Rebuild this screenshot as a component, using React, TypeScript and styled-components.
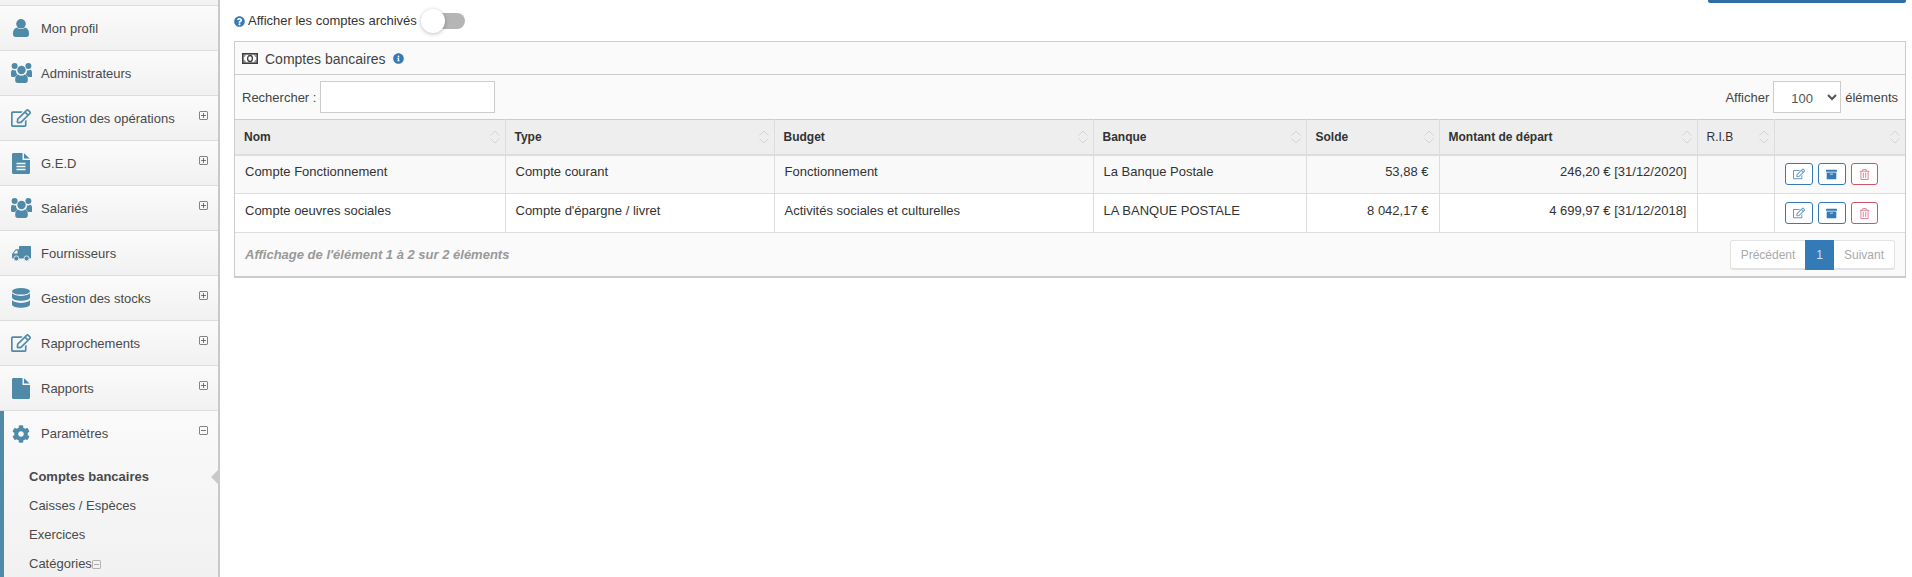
import React from "react";
import styled, { createGlobalStyle } from "styled-components";
import { FaArchive, FaCog, FaInfoCircle, FaQuestionCircle, FaRegEdit, FaRegTrashAlt } from "react-icons/fa";

const GlobalStyle = createGlobalStyle`
  html, body {
    margin: 0;
    padding: 0;
    height: 100%;
    overflow: hidden;
    background: #fff;
    font-family: "Liberation Sans", Arial, sans-serif;
    font-size: 13px;
    color: #333;
  }
`;

const SquareIcon = ({ plus }: { plus?: boolean }) => (
  <svg width="9" height="9" viewBox="0 0 9 9" fill="none" stroke="currentColor" strokeWidth="0.8">
    <rect x="0.4" y="0.4" width="8.2" height="8.2" rx="1.4" />
    <path d="M2 4.5h5" />
    {plus && <path d="M4.5 2v5" />}
  </svg>
);

const SortIcon = () => (
  <svg width="10" height="14" viewBox="0 0 10 14" fill="none" stroke="#d4d4d4" strokeWidth="1">
    <path d="M0.5 5.5L5 1l4.5 4.5" />
    <path d="M0.5 8.5L5 13l4.5-4.5" />
  </svg>
);

const UserIcon = () => (
  <svg width="16" height="18" viewBox="0 0 16 18" fill="currentColor">
    <circle cx="8" cy="4.8" r="4.8" />
    <path d="M0 14c0-3 1.6-5 4-5.6C5 9.4 6.4 10 8 10s3-.6 4-1.6c2.400.6 4 2.600 4 5.600v1.500c0 1.400-1 2.500-2.500 2.500h-11C1 18 0 16.900 0 15.500z" />
  </svg>
);

const UsersIcon = () => (
  <svg width="21" height="20" viewBox="0 0 21 20" fill="currentColor">
    <circle cx="3.600" cy="3" r="3" />
    <circle cx="17.400" cy="3" r="3" />
    <circle cx="10.500" cy="7" r="4.200" />
    <path d="M0 9.500c0-1.600.8-2.500 1.800-2.700.7.500 1.300.7 2 .7.500 0 1-.1 1.300-.3-.2 1.800.4 3.300 1.500 4.400-1.200.5-2 1.400-2.500 2.400H1.500C.6 14 0 13.400 0 12.500z" />
    <path d="M21 9.500c0-1.600-.8-2.500-1.800-2.700-.7.500-1.300.7-2 .7-.5 0-1-.1-1.300-.3.2 1.800-.4 3.300-1.500 4.400 1.200.5 2 1.400 2.500 2.400h3.600c.9 0 1.500-.6 1.500-1.500z" />
    <path d="M4.200 16c0-2.400 1.200-4 3-4.500 1 .8 2.100 1.200 3.300 1.200s2.300-.4 3.300-1.200c1.800.5 3 2.100 3 4.500v1.500c0 1.500-1 2.500-2.500 2.500h-7.600c-1.500 0-2.500-1-2.500-2.500z" />
  </svg>
);

const FileTextIcon = () => (
  <svg width="18" height="21" viewBox="0 0 18 21" fill="currentColor">
    <path d="M0 1.500C0 .6.600 0 1.500 0h9v7h7.500v12.500c0 .9-.6 1.500-1.500 1.500h-15C.6 21 0 20.400 0 19.500z" />
    <path d="M12 0.300L17.700 5.500H12z" />
    <path d="M4.500 9.700h9v1.600h-9zM4.500 12.700h9v1.600h-9zM4.500 15.700h9v1.600h-9z" fill="#f6f6f6" />
  </svg>
);

const FileIcon = () => (
  <svg width="18" height="21" viewBox="0 0 18 21" fill="currentColor">
    <path d="M0 1.500C0 .6.600 0 1.500 0h9v7h7.500v12.500c0 .9-.6 1.500-1.500 1.500h-15C.6 21 0 20.400 0 19.500z" />
    <path d="M12 0.300L17.700 5.500H12z" />
  </svg>
);

const TruckIcon = () => (
  <svg width="19" height="15" viewBox="0 0 19 15" fill="currentColor">
    <path d="M7 1c0-.6.400-1 1-1h10c.6 0 1 .4 1 1v10.500c0 .6-.4 1-1 1H7z" />
    <path d="M0 12V8L3.300 3.700c.3-.4.600-.5 1-.5H7v9.300H1c-.6 0-1-.2-1-.5z" />
    <path d="M1.500 7.500l2.500-3h1.500v3z" fill="#f6f6f6" />
    <circle cx="4.300" cy="12.400" r="2.500" stroke="#f6f6f6" strokeWidth="0.8" />
    <circle cx="14.600" cy="12.400" r="2.500" stroke="#f6f6f6" strokeWidth="0.8" />
  </svg>
);

const band = (s: number) =>
  `M0 ${s}C2 ${s + 2} 6 ${s + 2.7} 9 ${s + 2.7}S16 ${s + 2} 18 ${s}V${s + 4.200}C18 ${s + 6.200} 13 ${s + 7.500} 9 ${s + 7.500}S0 ${s + 6.200} 0 ${s + 4.200}Z`;

const DatabaseIcon = () => (
  <svg width="18" height="20" viewBox="0 0 18 20" fill="currentColor">
    <ellipse cx="9" cy="3.300" rx="9" ry="3.300" />
    <path d={band(5.200)} />
    <path d={band(12.300)} />
  </svg>
);

const MoneyIcon = () => (
  <svg width="16" height="11" viewBox="0 0 16 11" fill="none" stroke="#3d3d3d">
    <rect x="0.800" y="0.800" width="14.400" height="9.400" strokeWidth="1.600" />
    <ellipse cx="8" cy="5.500" rx="2.400" ry="3" strokeWidth="1.300" />
    <path d="M1.500 3.200h1.500V1.500M14.500 3.200H13V1.500M1.500 7.800h1.500v1.700M14.500 7.800H13v1.700" strokeWidth="0.700" />
  </svg>
);

const menu = [
  { label: "Mon profil", icon: <UserIcon /> },
  { label: "Administrateurs", icon: <UsersIcon /> },
  { label: "Gestion des opérations", icon: <FaRegEdit size={20} />, plus: true },
  { label: "G.E.D", icon: <FileTextIcon />, plus: true },
  { label: "Salariés", icon: <UsersIcon />, plus: true },
  { label: "Fournisseurs", icon: <TruckIcon /> },
  { label: "Gestion des stocks", icon: <DatabaseIcon />, plus: true },
  { label: "Rapprochements", icon: <FaRegEdit size={20} />, plus: true },
  { label: "Rapports", icon: <FileIcon />, plus: true },
];

const rows = [
  ["Compte Fonctionnement", "Compte courant", "Fonctionnement", "La Banque Postale", "53,88 €", "246,20 € [31/12/2020]"],
  ["Compte oeuvres sociales", "Compte d'épargne / livret", "Activités sociales et culturelles", "LA BANQUE POSTALE", "8 042,17 €", "4 699,97 € [31/12/2018]"],
];

const columns = [
  { label: "Nom", width: 270 },
  { label: "Type", width: 269 },
  { label: "Budget", width: 319 },
  { label: "Banque", width: 213 },
  { label: "Solde", width: 133 },
  { label: "Montant de départ", width: 258 },
  { label: "R.I.B", width: 77, light: true },
  { label: "", width: 131 },
];

export default function App() {
  return (
    <Page>
      <GlobalStyle />
      <Sidebar>
        <TopStub />
        {menu.map((item) => (
          <MenuItem key={item.label}>
            <MenuIcon>{item.icon}</MenuIcon>
            <MenuLabel>{item.label}</MenuLabel>
            {item.plus && (
              <Toggle>
                <SquareIcon plus />
              </Toggle>
            )}
          </MenuItem>
        ))}
        <OpenGroup>
          <OpenHead>
            <MenuIcon>
              <FaCog size={18} />
            </MenuIcon>
            <MenuLabel>Paramètres</MenuLabel>
            <Toggle>
              <SquareIcon />
            </Toggle>
          </OpenHead>
          <SubItem $active>
            Comptes bancaires
            <ActiveArrow />
          </SubItem>
          <SubItem>Caisses / Espèces</SubItem>
          <SubItem>Exercices</SubItem>
          <SubItem>
            Catégories
            <SubToggle>
              <SquareIcon />
            </SubToggle>
          </SubItem>
        </OpenGroup>
      </Sidebar>

      <Content>
        <TopButtonEdge />
        <ArchiveRow>
          <FaQuestionCircle size={11} color="#337ab7" />
          <ArchiveText>Afficher les comptes archivés</ArchiveText>
          <Switch>
            <Knob />
          </Switch>
        </ArchiveRow>

        <Panel>
          <PanelHead>
            <MoneyIcon />
            <PanelTitle>Comptes bancaires</PanelTitle>
            <FaInfoCircle size={11} color="#337ab7" />
          </PanelHead>
          <Tools>
            <ToolGroup>
              Rechercher :
              <SearchInput type="text" />
            </ToolGroup>
            <ToolGroup>
              Afficher
              <LengthSelect defaultValue="100">
                <option value="100">100</option>
              </LengthSelect>
              éléments
            </ToolGroup>
          </Tools>
          <Table>
            <colgroup>
              {columns.map((c, i) => (
                <col key={i} style={{ width: c.width }} />
              ))}
            </colgroup>
            <thead>
              <tr>
                {columns.map((c, i) => (
                  <Th key={i} $light={c.light}>
                    <ThInner>
                      {c.label}
                      <SortIcon />
                    </ThInner>
                  </Th>
                ))}
              </tr>
            </thead>
            <tbody>
              {rows.map((r, idx) => (
                <Row key={idx} $odd={idx === 0}>
                  <Td>{r[0]}</Td>
                  <Td>{r[1]}</Td>
                  <Td>{r[2]}</Td>
                  <Td>{r[3]}</Td>
                  <Td $right>{r[4]}</Td>
                  <Td $right>{r[5]}</Td>
                  <Td />
                  <Td>
                    <Actions>
                      <ActionButton>
                        <Muted>
                          <FaRegEdit size={12} />
                        </Muted>
                      </ActionButton>
                      <ActionButton>
                        <FaArchive size={11} />
                      </ActionButton>
                      <ActionButton $danger>
                        <Muted>
                          <FaRegTrashAlt size={11} />
                        </Muted>
                      </ActionButton>
                    </Actions>
                  </Td>
                </Row>
              ))}
            </tbody>
          </Table>
          <PanelFoot>
            <Info>Affichage de l'élément 1 à 2 sur 2 éléments</Info>
            <Pager>
              <PageLink $w={74}>Précédent</PageLink>
              <PageLink $w={29} $current>
                1
              </PageLink>
              <PageLink $w={60}>Suivant</PageLink>
            </Pager>
          </PanelFoot>
        </Panel>
      </Content>
    </Page>
  );
}

const Page = styled.div`
  display: flex;
  height: 577px;
  overflow: hidden;
`;

const Sidebar = styled.aside`
  width: 218px;
  flex-shrink: 0;
  height: 577px;
  overflow: hidden;
  border-right: 2px solid #c9c9c9;
  background: #f7f7f7;
`;

const TopStub = styled.div`
  height: 5px;
  background: #f2f2f2;
  border-bottom: 1px solid #ddd;
`;

const MenuItem = styled.div`
  box-sizing: border-box;
  height: 45px;
  display: flex;
  align-items: center;
  position: relative;
  padding-left: 10px;
  border-bottom: 1px solid #ddd;
  background: linear-gradient(#fbfbfb, #f1f1f1);
`;

const MenuIcon = styled.span`
  width: 22px;
  height: 22px;
  margin-right: 9px;
  display: flex;
  align-items: center;
  justify-content: center;
  color: #4f8aa8;
`;

const MenuLabel = styled.span`
  color: #4a4a4a;
  font-size: 13px;
`;

const Toggle = styled.span`
  position: absolute;
  right: 10px;
  top: 15px;
  display: flex;
  color: #555;
`;

const OpenGroup = styled.div`
  border-left: 4px solid #4f8aa8;
  height: 170px;
  background: linear-gradient(#fafafa, #f1f1f1);
`;

const OpenHead = styled.div`
  position: relative;
  height: 45px;
  margin-bottom: 6px;
  display: flex;
  align-items: center;
  padding-left: 6px;
`;

const SubItem = styled.div<{ $active?: boolean }>`
  position: relative;
  height: 29px;
  display: flex;
  align-items: center;
  padding-left: 25px;
  font-size: 13px;
  color: #4a4a4a;
  font-weight: ${(p) => (p.$active ? 700 : 400)};
`;

const ActiveArrow = styled.span`
  position: absolute;
  right: 0;
  top: 8px;
  border-style: solid;
  border-width: 7px 7px 7px 0;
  border-color: transparent #c9c9c9 transparent transparent;
`;

const SubToggle = styled.span`
  display: flex;
  margin-top: 2px;
  color: #999;
`;

const Content = styled.main`
  flex: 1;
  min-width: 0;
  padding: 0 6px 0 14px;
`;

const TopButtonEdge = styled.div`
  width: 198px;
  height: 3px;
  margin-left: auto;
  background: #2f6ea5;
  border-radius: 0 0 2px 2px;
`;

const ArchiveRow = styled.div`
  height: 38px;
  display: flex;
  align-items: center;
  gap: 3px;
  padding-bottom: 2px;
  box-sizing: border-box;
`;

const ArchiveText = styled.span`
  margin-bottom: 1px;
`;

const Switch = styled.span`
  position: relative;
  width: 40px;
  height: 16px;
  margin-left: 5px;
  border-radius: 8px;
  background: #b5b5b5;
`;

const Knob = styled.span`
  position: absolute;
  left: -4px;
  top: -4px;
  width: 24px;
  height: 24px;
  border-radius: 50%;
  background: #fff;
  box-shadow: 0 1px 4px rgba(0, 0, 0, 0.25);
`;

const Panel = styled.section`
  border: 1px solid #ccc;
  border-bottom-width: 2px;
  background: #fafafa;
`;

const PanelHead = styled.div`
  box-sizing: border-box;
  height: 33px;
  display: flex;
  align-items: center;
  padding: 1px 7px 0;
  border-bottom: 1px solid #ccc;
  color: #444;
  svg:last-child {
    margin-left: 7px;
  }
`;

const PanelTitle = styled.span`
  margin-left: 7px;
  font-size: 14px;
  color: #444;
`;

const Tools = styled.div`
  box-sizing: border-box;
  height: 44px;
  display: flex;
  align-items: center;
  justify-content: space-between;
  padding: 0 7px;
  color: #444;
`;

const ToolGroup = styled.label`
  display: flex;
  align-items: center;
  gap: 4px;
`;

const SearchInput = styled.input`
  box-sizing: border-box;
  width: 175px;
  height: 32px;
  border: 1px solid #ccc;
  background: #fff;
  outline: none;
`;

const LengthSelect = styled.select`
  box-sizing: border-box;
  width: 68px;
  height: 32px;
  padding: 2px 0 0 13px;
  border: 1px solid #ccc;
  border-radius: 0;
  background: #fff;
  color: #555;
  font-family: inherit;
  font-size: 13px;
`;

const Table = styled.table`
  width: 100%;
  table-layout: fixed;
  border-collapse: collapse;
`;

const Th = styled.th<{ $light?: boolean }>`
  box-sizing: border-box;
  height: 35px;
  padding: 0 5px 0 9px;
  background: #eee;
  border-top: 1px solid #ccc;
  border-right: 1px solid #ddd;
  border-bottom: 2px solid #ddd;
  text-align: left;
  font-size: 12px;
  font-weight: ${(p) => (p.$light ? 400 : 700)};
  color: #333;
  &:last-child {
    border-right: none;
  }
`;

const ThInner = styled.div`
  display: flex;
  align-items: center;
  justify-content: space-between;
  svg {
    margin-left: auto;
  }
`;

const Row = styled.tr<{ $odd?: boolean }>`
  background: ${(p) => (p.$odd ? "#f9f9f9" : "#fff")};
`;

const Td = styled.td<{ $right?: boolean }>`
  box-sizing: border-box;
  height: 39px;
  padding: 0 10px 5px 10px;
  border-right: 1px solid #ddd;
  border-bottom: 1px solid #ddd;
  text-align: ${(p) => (p.$right ? "right" : "left")};
  font-size: 13px;
  color: #333;
  &:last-child {
    border-right: none;
  }
`;

const Actions = styled.div`
  display: flex;
  gap: 5px;
  margin-top: 5px;
`;

const ActionButton = styled.button<{ $danger?: boolean }>`
  box-sizing: border-box;
  width: ${(p) => (p.$danger ? 27 : 28)}px;
  height: 22px;
  padding: 0;
  display: flex;
  align-items: center;
  justify-content: center;
  background: #fff;
  border-radius: 3px;
  border: 1px solid ${(p) => (p.$danger ? "#c9566b" : "#337ab7")};
  color: ${(p) => (p.$danger ? "#d9607a" : "#337ab7")};
`;

const Muted = styled.span`
  display: flex;
  opacity: 0.75;
`;

const PanelFoot = styled.div`
  box-sizing: border-box;
  height: 43px;
  display: flex;
  align-items: center;
  justify-content: space-between;
  padding: 0 10px 0 10px;
`;

const Info = styled.span`
  font-size: 13px;
  font-weight: 700;
  font-style: italic;
  color: #999;
`;

const Pager = styled.div`
  display: flex;
  height: 30px;
  border: 1px solid #e3e3e3;
  border-bottom-width: 2px;
  border-radius: 3px;
  box-sizing: border-box;
  background: #fff;
`;

const PageLink = styled.span<{ $w: number; $current?: boolean }>`
  width: ${(p) => p.$w}px;
  margin: -1px 0 -2px;
  display: flex;
  align-items: center;
  justify-content: center;
  font-size: 12px;
  color: ${(p) => (p.$current ? "#cfe0ee" : "#aaa")};
  background: ${(p) => (p.$current ? "#337ab7" : "transparent")};
`;
